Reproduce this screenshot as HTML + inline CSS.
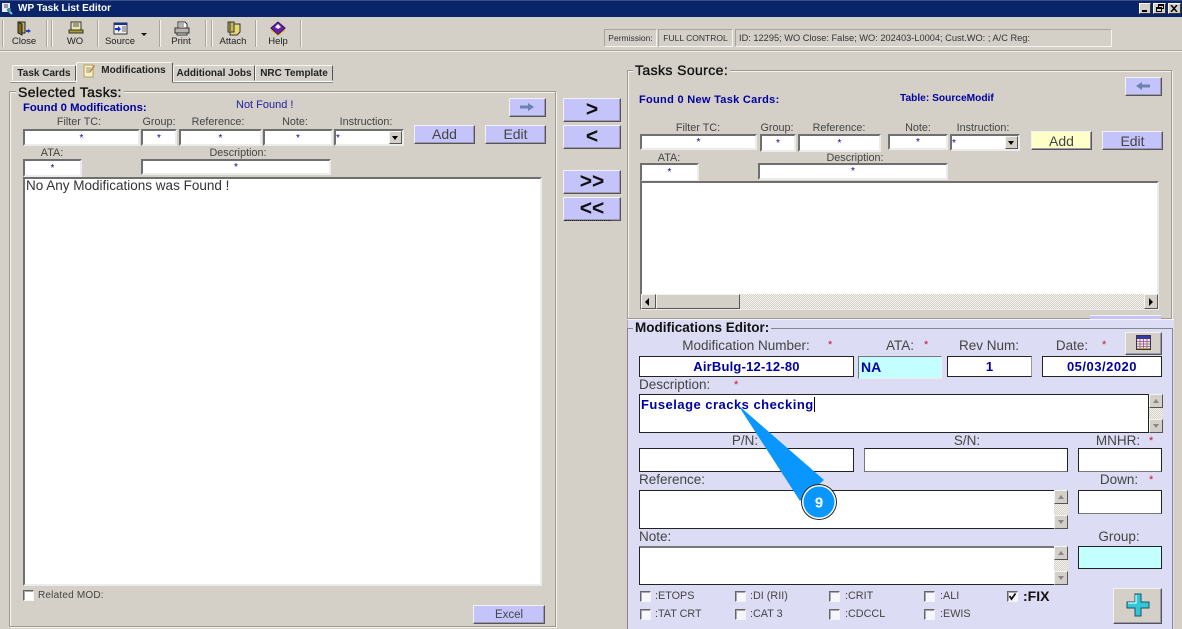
<!DOCTYPE html>
<html><head><meta charset="utf-8"><title>WP Task List Editor</title>
<style>
html,body{margin:0;padding:0;width:1182px;height:629px;overflow:hidden;background:#d4d0c8}
body{position:relative;font-family:"Liberation Sans",sans-serif;color:#333}
div,span,svg{position:absolute;box-sizing:border-box}
.t{white-space:nowrap;line-height:14px;height:14px}
.c{transform:translateX(-50%);white-space:nowrap;line-height:14px;height:14px}
.f10{font-size:10px}.f11{font-size:10.8px;color:#444}.f12{font-size:13.5px;color:#444}
.tb{font-size:9.5px;color:#222;top:35px;transform:translateX(-50%);line-height:13px}
.sep{top:20px;height:27px;width:2px;border-left:1px solid #aaa69c;border-right:1px solid #f4f2ec}
.in{background:#fff;border:2px solid;border-color:#6f6f6f #ececec #ececec #6f6f6f;color:#0000a0;text-align:center;font-size:10px;line-height:15px}
.bk{background:#fff;border:1px solid #222;border-bottom-width:1.5px}
.btn{background:#c4c4fa;border:1px solid;border-color:#f2f2f2 #555 #555 #f2f2f2;box-shadow:inset -1px -1px 0 #9a98b4;text-align:center;color:#444;font-size:14px}
.mid{left:563px;width:58px;height:24px;font:bold 21px/22px "Liberation Sans",sans-serif;color:#111}
.gb{border:1px solid #9c9a92;box-shadow:1px 1px 0 #f4f2ec,inset 1px 1px 0 #f4f2ec}
.leg{background:#d4d0c8;font-size:14px;line-height:14px;color:#111;-webkit-text-stroke:.35px #111;letter-spacing:.4px;padding:0 2px;white-space:nowrap}
.blue{color:#0000a0;font-weight:bold;font-size:11.3px;white-space:nowrap;line-height:14px}
.tab{background:#d4d0c8;border:1px solid;border-color:#f6f6f2 #555 transparent #f6f6f2;border-radius:2px 2px 0 0;font:bold 10px/15px "Liberation Sans",sans-serif;color:#222;text-align:center}
.cb{width:11px;height:11px;background:#f6f6ff;border:1px solid;border-color:#666 #f4f4f4 #f4f4f4 #666;box-shadow:inset 1px 1px 0 #aaa}
.star{color:#d01030;font-size:11px;line-height:10px}
.sb{width:14px;background:repeating-conic-gradient(#d4d0c8 0 25%,#f4f3ef 0 50%) 0 0/2px 2px}
.sbb{left:0;width:14px;height:14px;background:#d4d0c8;border:1px solid;border-color:#f4f4f4 #555 #555 #f4f4f4}
.ar{left:3px;top:4px;width:0;height:0;border-left:3px solid transparent;border-right:3px solid transparent}
</style></head><body>

<!-- title bar -->
<div style="left:0;top:0;width:1182px;height:17px;background:#0a246a;border-top:1px solid #3a4f8a"></div>
<svg style="left:1px;top:2px" width="13" height="13" viewBox="0 0 13 13"><rect x="1" y="1" width="8" height="9" fill="#e8e8f4"/><path d="M3 3h4M3 5h4" stroke="#446" /><path d="M6 7l5 5" stroke="#7cc" stroke-width="2"/><circle cx="8" cy="8" r="2" fill="#48a"/></svg>
<div class="t" style="left:18px;top:2px;font-size:10px;font-weight:bold;color:#fff">WP Task List Editor</div>
<div style="left:1139px;top:3px;width:12px;height:11px;background:#d4d0c8;border:1px solid;border-color:#fff #333 #333 #fff"></div>
<div style="left:1142px;top:10px;width:5px;height:2px;background:#000"></div>
<div style="left:1153px;top:3px;width:13px;height:11px;background:#d4d0c8;border:1px solid;border-color:#fff #333 #333 #fff"></div>
<div style="left:1158px;top:4px;width:6px;height:5px;border:1px solid #000;border-top-width:2px"></div>
<div style="left:1156px;top:7px;width:6px;height:5px;border:1px solid #000;border-top-width:2px;background:#d4d0c8"></div>
<div style="left:1168px;top:3px;width:13px;height:11px;background:#d4d0c8;border:1px solid;border-color:#fff #333 #333 #fff"></div>
<svg style="left:1170px;top:5px" width="9" height="7"><path d="M1 0l6 7M7 0l-6 7" stroke="#000" stroke-width="1.5"/></svg>

<!-- toolbar -->
<div style="left:0;top:50px;width:1182px;height:2px;background:#a8a49c;border-bottom:1px solid #f0eee8"></div>
<div class="sep" style="left:2px"></div><div class="sep" style="left:46px"></div><div class="sep" style="left:51px"></div>
<div class="sep" style="left:97px"></div><div class="sep" style="left:159px"></div><div class="sep" style="left:205px"></div>
<div class="sep" style="left:211px"></div><div class="sep" style="left:255px"></div><div class="sep" style="left:300px"></div>

<svg style="left:16px;top:21px" width="16" height="15" viewBox="0 0 16 15"><path d="M2 1h7v11H2z" fill="#c8b060" stroke="#222"/><path d="M2 1l4 2v11l-4-2z" fill="#7a6a20" stroke="#222"/><path d="M10 10h3" stroke="#2040c0" stroke-width="2"/><path d="M12 8l3 2-3 2z" fill="#2040c0"/></svg>
<svg style="left:68px;top:21px" width="16" height="14" viewBox="0 0 16 14"><rect x="3" y="1" width="10" height="8" fill="#e8e4b0" stroke="#333"/><path d="M5 3h6M5 5h6" stroke="#555"/><path d="M1 9h14v3H1z" fill="#a8a020" stroke="#333"/></svg>
<svg style="left:113px;top:22px" width="15" height="13" viewBox="0 0 15 13"><rect x="1" y="1" width="13" height="11" fill="#f0f0f0" stroke="#333"/><rect x="1" y="1" width="13" height="2" fill="#1030a0"/><path d="M9 5h4M9 7h4M9 9h4" stroke="#666"/><path d="M2 7h4" stroke="#1030c0" stroke-width="2"/><path d="M5 4l3 3-3 3z" fill="#1030c0"/></svg>
<div style="left:141px;top:33px;width:0;height:0;border-left:3px solid transparent;border-right:3px solid transparent;border-top:3px solid #111"></div>
<svg style="left:174px;top:21px" width="16" height="15" viewBox="0 0 16 15"><path d="M4 1h7l2 2v4H4z" fill="#fff" stroke="#333"/><path d="M1 7h14v5H1z" fill="#b8b4ac" stroke="#333"/><path d="M3 12h10v2H3z" fill="#eee" stroke="#333"/><path d="M5 3h5M5 5h5" stroke="#666"/></svg>
<svg style="left:226px;top:21px" width="16" height="15" viewBox="0 0 16 15"><path d="M4 3h10v8l-3 3H4z" fill="#e8d870" stroke="#333"/><path d="M2 1h6v10H2z" fill="#c8b850" stroke="#333"/><path d="M4 1v9" stroke="#333"/></svg>
<svg style="left:270px;top:21px" width="16" height="15" viewBox="0 0 16 15"><path d="M1 7l7-6 7 6-7 7z" fill="#6a20a8" stroke="#301060"/><path d="M8 3l3 3-3 2-3-2z" fill="#f0f0ff"/><path d="M1 8l7 6 7-6v2l-7 5-7-5z" fill="#e0c030"/></svg>

<div class="tb" style="left:24px">Close</div><div class="tb" style="left:75px">WO</div><div class="tb" style="left:120px">Source</div>
<div class="tb" style="left:181px">Print</div><div class="tb" style="left:233px">Attach</div><div class="tb" style="left:278px">Help</div>

<!-- status -->
<div class="t" style="left:604px;top:29px;width:53px;height:18px;border:1px solid;border-color:#a8a49c #f4f4f0 #f4f4f0 #a8a49c;font-size:8.5px;line-height:16px;text-align:center">Permission:</div>
<div class="t" style="left:658px;top:29px;width:75px;height:18px;border:1px solid;border-color:#a8a49c #f4f4f0 #f4f4f0 #a8a49c;font-size:8.5px;line-height:16px;text-align:center">FULL CONTROL</div>
<div class="t" style="left:735px;top:29px;width:377px;height:18px;border:1px solid;border-color:#a8a49c #f4f4f0 #f4f4f0 #a8a49c;font-size:9.25px;line-height:16px;padding-left:3px">ID: 12295; WO Close: False; WO: 202403-L0004; Cust.WO: ; A/C Reg:</div>

<!-- tabs -->
<div style="left:10px;top:81px;width:323px;height:2px;background:#8c8a84;border-top:1px solid #fff"></div>
<div class="tab" style="left:12px;top:65px;width:64px;height:16px">Task Cards</div>
<div class="tab" style="left:173px;top:65px;width:82px;height:16px">Additional Jobs</div>
<div class="tab" style="left:255px;top:65px;width:78px;height:16px">NRC Template</div>
<div class="tab" style="left:76px;top:62px;width:97px;height:21px;padding-left:18px;line-height:16px">Modifications</div>
<svg style="left:83px;top:63px" width="13" height="15" viewBox="0 0 13 15"><path d="M1 2h9v12H1z" fill="#f8f0c0" stroke="#b0a060"/><path d="M3 5h5M3 7h5M3 9h4" stroke="#999"/><path d="M6 9l5-7 1 1-5 7z" fill="#c08030"/></svg>

<!-- selected tasks -->
<div class="gb" style="left:9px;top:91px;width:547px;height:536px"></div>
<div class="leg" style="left:16px;top:85px">Selected Tasks:</div>
<div class="blue" style="left:23px;top:101px">Found 0 Modifications:</div>
<div class="t" style="left:236px;top:98px;font-size:11px;color:#2020a0">Not Found !</div>
<div class="btn" style="left:509px;top:98px;width:37px;height:19px"></div>
<svg style="left:520px;top:102px" width="15" height="10"><path d="M0 3.500h8V1l6 4-6 4V6.500H0z" fill="#6a84b0"/></svg>
<div class="c f11" style="left:79px;top:115px">Filter TC:</div><div class="c f11" style="left:159px;top:115px">Group:</div>
<div class="c f11" style="left:218px;top:115px">Reference:</div><div class="c f11" style="left:295px;top:115px">Note:</div>
<div class="c f11" style="left:366px;top:115px">Instruction:</div>
<div class="in" style="left:23px;top:129px;width:117px;height:17px">*</div>
<div class="in" style="left:141px;top:129px;width:36px;height:17px">*</div>
<div class="in" style="left:179px;top:129px;width:83px;height:17px">*</div>
<div class="in" style="left:263px;top:129px;width:70px;height:17px">*</div>
<div class="in" style="left:334px;top:129px;width:70px;height:17px;text-align:left">*</div>
<div style="left:389px;top:131px;width:13px;height:13px;background:#d4d0c8;border:1px solid;border-color:#f4f4f4 #555 #555 #f4f4f4"></div>
<div style="left:392px;top:136px;width:0;height:0;border-left:3.500px solid transparent;border-right:3.500px solid transparent;border-top:4px solid #000"></div>
<div class="btn" style="left:414px;top:125px;width:61px;height:19px;line-height:17px">Add</div>
<div class="btn" style="left:485px;top:125px;width:61px;height:19px;line-height:17px">Edit</div>
<div class="c f11" style="left:52px;top:146px">ATA:</div><div class="c f11" style="left:238px;top:146px">Description:</div>
<div class="in" style="left:23px;top:159px;width:59px;height:18px">*</div>
<div class="in" style="left:141px;top:159px;width:190px;height:16px;line-height:13px">*</div>
<div class="in" style="left:23px;top:177px;width:519px;height:409px;text-align:left;color:#333;font-size:13.5px;line-height:14px;padding:0 0 0 1px">No Any Modifications was Found !</div>
<div class="cb" style="left:23px;top:590px;background:#fff"></div>
<div class="t f10" style="left:38px;top:589px;color:#444;letter-spacing:.2px">Related MOD:</div>
<div class="btn" style="left:473px;top:605px;width:72px;height:19px;font-size:11.500px;line-height:18px">Excel</div>

<!-- middle buttons -->
<div class="btn mid" style="top:98px">&gt;</div>
<div class="btn mid" style="top:125px">&lt;</div>
<div class="btn mid" style="top:170px">&gt;&gt;</div>
<div class="btn mid" style="top:197px">&lt;&lt;</div>
<div style="left:565px;top:220px;width:46px;border-top:1px dotted #222"></div>

<!-- tasks source -->
<div class="gb" style="left:627px;top:70px;width:545px;height:249px"></div>
<div class="leg" style="left:633px;top:63px">Tasks Source:</div>
<div class="blue" style="left:639px;top:93px;font-size:11px;letter-spacing:.3px">Found 0 New Task Cards:</div>
<div class="blue" style="left:900px;top:92px;font-size:10.2px">Table: SourceModif</div>
<div class="btn" style="left:1125px;top:77px;width:37px;height:19px"></div>
<svg style="left:1136px;top:81px" width="15" height="10"><path d="M14 3.500H6V1L0 5l6 4V6.500h8z" fill="#6a84b0"/></svg>
<div class="c f11" style="left:698px;top:121px">Filter TC:</div><div class="c f11" style="left:777px;top:121px">Group:</div>
<div class="c f11" style="left:839px;top:121px">Reference:</div><div class="c f11" style="left:918px;top:121px">Note:</div>
<div class="c f11" style="left:983px;top:121px">Instruction:</div>
<div class="in" style="left:640px;top:134px;width:117px;height:16px;line-height:13px">*</div>
<div class="in" style="left:760px;top:134px;width:36px;height:18px">*</div>
<div class="in" style="left:798px;top:134px;width:83px;height:18px">*</div>
<div class="in" style="left:888px;top:134px;width:60px;height:16px;line-height:13px">*</div>
<div class="in" style="left:950px;top:134px;width:70px;height:17px;text-align:left">*</div>
<div style="left:1005px;top:136px;width:13px;height:13px;background:#d4d0c8;border:1px solid;border-color:#f4f4f4 #555 #555 #f4f4f4"></div>
<div style="left:1008px;top:141px;width:0;height:0;border-left:3.500px solid transparent;border-right:3.500px solid transparent;border-top:4px solid #000"></div>
<div class="btn" style="left:1031px;top:131px;width:61px;height:19px;line-height:18px;background:#ffffc8">Add</div>
<div class="btn" style="left:1102px;top:131px;width:61px;height:19px;line-height:18px">Edit</div>
<div class="c f11" style="left:669px;top:151px">ATA:</div><div class="c f11" style="left:855px;top:151px">Description:</div>
<div class="in" style="left:640px;top:163px;width:59px;height:19px">*</div>
<div class="in" style="left:758px;top:163px;width:190px;height:17px;line-height:13px">*</div>
<div class="in" style="left:640px;top:181px;width:519px;height:129px"></div>
<div style="left:642px;top:294px;width:515px;height:15px;background:repeating-conic-gradient(#d4d0c8 0 25%,#f4f3ef 0 50%) 0 0/2px 2px"></div>
<div style="left:641px;top:294px;width:15px;height:15px;background:#d4d0c8;border:1px solid;border-color:#f4f4f4 #555 #555 #f4f4f4"></div>
<div style="left:645px;top:298px;width:0;height:0;border-top:4px solid transparent;border-bottom:4px solid transparent;border-right:4px solid #000"></div>
<div style="left:656px;top:294px;width:84px;height:15px;background:#d4d0c8;border:1px solid;border-color:#f4f4f4 #555 #555 #f4f4f4"></div>
<div style="left:1144px;top:294px;width:14px;height:15px;background:#d4d0c8;border:1px solid;border-color:#f4f4f4 #555 #555 #f4f4f4"></div>
<div style="left:1149px;top:298px;width:0;height:0;border-top:4px solid transparent;border-bottom:4px solid transparent;border-left:4px solid #000"></div>
<div style="left:1090px;top:315px;width:71px;height:5px;background:#c4c4fa;border-top:1px solid #f2f2f2"></div>

<!-- editor -->
<div style="left:627px;top:319px;width:547px;height:310px;background:#dcdcf4;border-top:1px solid #f4f4fa;border-left:1px solid #b0aeb0"></div>
<div style="left:627px;top:328px;width:546px;height:301px;border:1px solid #86868c;border-bottom:0;border-left-color:#86868c"></div>
<div class="t" style="left:633px;top:321px;background:#dcdcf4;padding:0 2px;font-size:13.5px;font-weight:bold;color:#111">Modifications Editor:</div>

<div class="c f12" style="left:746px;top:339px">Modification Number:</div><div class="star" style="left:828px;top:340px">*</div>
<div class="c f12" style="left:900px;top:339px">ATA:</div><div class="star" style="left:924px;top:340px">*</div>
<div class="c f12" style="left:989px;top:339px">Rev Num:</div>
<div class="c f12" style="left:1072px;top:339px">Date:</div><div class="star" style="left:1102px;top:340px">*</div>
<div class="btn" style="left:1125px;top:332px;width:37px;height:23px;background:#d4d0c8"></div>
<svg style="left:1136px;top:335px" width="15" height="15" viewBox="0 0 15 15"><rect x=".5" y=".5" width="14" height="14" fill="#f0e8d0" stroke="#335"/><rect x="1" y="1" width="13" height="3" fill="#3838a0"/><path d="M1 6.500h13M1 9h13M1 11.500h13M4 4v10M7.500 4v10M11 4v10" stroke="#9050a0" stroke-width=".8"/><rect x="1" y="13" width="13" height="1" fill="#c8a020"/></svg>

<div class="bk" style="left:639px;top:356px;width:215px;height:21px;text-align:center;color:#0000a0;font:bold 13px/19px 'Liberation Sans',sans-serif;letter-spacing:.2px">AirBulg-12-12-80</div>
<div style="left:858px;top:356px;width:84px;height:23px;background:#c4ffff;border:1px solid;border-color:#777 #eee #eee #777;color:#0000a0;font:bold 14px/21px 'Liberation Sans',sans-serif;padding-left:2px">NA</div>
<div class="bk" style="left:947px;top:356px;width:85px;height:21px;text-align:center;color:#0000a0;font:bold 13px/19px 'Liberation Sans',sans-serif;border-right-color:#999">1</div>
<div class="bk" style="left:1042px;top:356px;width:120px;height:21px;text-align:center;color:#0000a0;font:bold 13px/19px 'Liberation Sans',sans-serif;letter-spacing:.5px">05/03/2020</div>

<div class="t f12" style="left:639px;top:378px">Description:</div><div class="star" style="left:734px;top:380px">*</div>
<div class="bk" style="left:639px;top:394px;width:510px;height:39px;color:#0000a0;font:bold 13px/19px 'Liberation Sans',sans-serif;padding-left:1px;letter-spacing:.48px">Fuselage cracks checking<span style="position:static;border-left:1px solid #000;margin-left:0"></span></div>
<div class="sb" style="left:1149px;top:394px;height:39px"><div class="sbb" style="top:0"><div class="ar" style="border-bottom:4px solid #888;top:4px"></div></div><div class="sbb" style="bottom:0"><div class="ar" style="border-top:4px solid #888;top:4px"></div></div></div>

<div class="c f12" style="left:745px;top:434px">P/N:</div><div class="c f12" style="left:967px;top:434px">S/N:</div>
<div class="c f12" style="left:1118px;top:434px">MNHR:</div><div class="star" style="left:1149px;top:436px">*</div>
<div class="bk" style="left:639px;top:448px;width:215px;height:24px"></div>
<div class="bk" style="left:864px;top:448px;width:204px;height:24px;border-left-color:#777;border-bottom-color:#777"></div>
<div class="bk" style="left:1078px;top:448px;width:84px;height:24px;border-bottom-color:#777"></div>

<div class="t f12" style="left:639px;top:473px">Reference:</div>
<div class="c f12" style="left:1119px;top:473px">Down:</div><div class="star" style="left:1149px;top:475px">*</div>
<div class="bk" style="left:639px;top:490px;width:416px;height:39px"></div>
<div class="sb" style="left:1054px;top:490px;height:39px"><div class="sbb" style="top:0"><div class="ar" style="border-bottom:4px solid #888;top:4px"></div></div><div class="sbb" style="bottom:0"><div class="ar" style="border-top:4px solid #888;top:4px"></div></div></div>
<div class="bk" style="left:1078px;top:490px;width:84px;height:24px;border-bottom-color:#777"></div>

<div class="t f12" style="left:639px;top:530px">Note:</div>
<div class="c f12" style="left:1119px;top:530px">Group:</div>
<div class="bk" style="left:639px;top:546px;width:416px;height:39px;border-top:2px solid #777"></div>
<div class="sb" style="left:1054px;top:546px;height:39px"><div class="sbb" style="top:0"><div class="ar" style="border-bottom:4px solid #888;top:4px"></div></div><div class="sbb" style="bottom:0"><div class="ar" style="border-top:4px solid #888;top:4px"></div></div></div>
<div class="bk" style="left:1078px;top:546px;width:84px;height:23px;background:#c4ffff"></div>

<div class="cb" style="left:640px;top:591px"></div><div class="t f11" style="left:655px;top:589px">:ETOPS</div>
<div class="cb" style="left:735px;top:591px"></div><div class="t f11" style="left:750px;top:589px">:DI (RII)</div>
<div class="cb" style="left:829px;top:591px"></div><div class="t f11" style="left:845px;top:589px">:CRIT</div>
<div class="cb" style="left:924px;top:591px"></div><div class="t f11" style="left:940px;top:589px">:ALI</div>
<div class="cb" style="left:1007px;top:591px"></div>
<svg style="left:1008px;top:592px" width="9" height="9"><path d="M1.500 4l2 3 4-5.500" fill="none" stroke="#111" stroke-width="1.800"/></svg>
<div class="t" style="left:1023px;top:589px;font-size:14px;font-weight:bold;color:#111">:FIX</div>
<div class="cb" style="left:640px;top:609px"></div><div class="t f11" style="left:655px;top:607px">:TAT CRT</div>
<div class="cb" style="left:735px;top:609px"></div><div class="t f11" style="left:750px;top:607px">:CAT 3</div>
<div class="cb" style="left:829px;top:609px"></div><div class="t f11" style="left:845px;top:607px">:CDCCL</div>
<div class="cb" style="left:924px;top:609px"></div><div class="t f11" style="left:940px;top:607px">:EWIS</div>

<div class="btn" style="left:1113px;top:588px;width:49px;height:36px;background:#d4d0c8"></div>
<svg style="left:1125px;top:592px" width="26" height="26" viewBox="0 0 26 26"><path d="M10 2h6v8h8v6h-8v8h-6v-8H2v-6h8z" fill="#30c8d8" stroke="#205060" stroke-width="1"/><path d="M11 3v8H3" fill="none" stroke="#b8f4f8" stroke-width="1.500"/></svg>

<!-- callout -->
<svg style="left:730px;top:400px" width="115" height="125" viewBox="730 400 115 125">
<path d="M738 405L824 480L800 501Z" fill="#0a96ff"/>
<circle cx="819" cy="502" r="18" fill="#222"/><circle cx="819" cy="502" r="17" fill="#fff"/><circle cx="819" cy="502" r="15.500" fill="#0a96ff"/>
<text x="819" y="507.500" text-anchor="middle" font-family="Liberation Sans, sans-serif" font-weight="bold" font-size="15" fill="#fff">9</text>
</svg>
</body></html>
